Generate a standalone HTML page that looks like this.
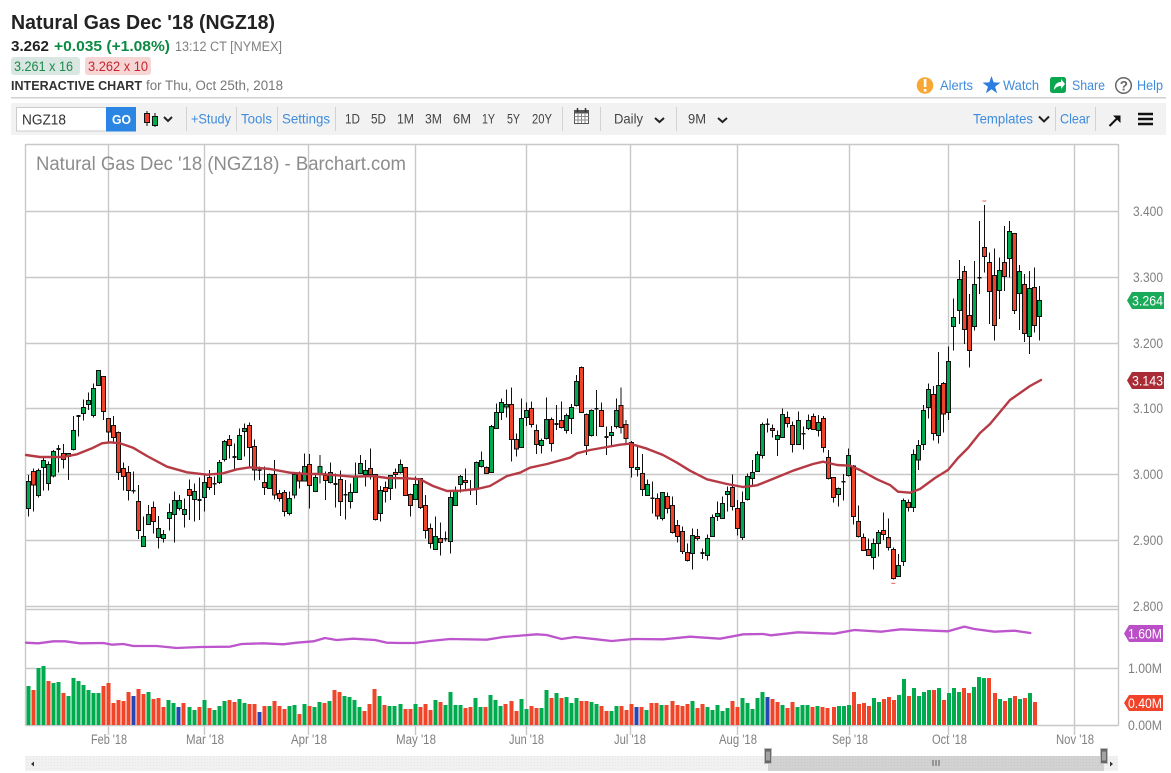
<!DOCTYPE html>
<html><head><meta charset="utf-8"><title>Natural Gas Dec '18 (NGZ18)</title>
<style>
html,body{margin:0;padding:0;background:#fff;width:1171px;height:773px;overflow:hidden}
svg{display:block}
text{font-family:"Liberation Sans",sans-serif}
.grid{stroke:#c8c8c8;stroke-width:1.4;fill:none}
.w{stroke:#111;stroke-width:3;fill:none;shape-rendering:crispEdges}
.g{fill:#00a84f;stroke:#111;stroke-width:3;shape-rendering:crispEdges}
.r{fill:#f0442a;stroke:#111;stroke-width:3;shape-rendering:crispEdges}
.d{stroke:#111;stroke-width:5;fill:none;shape-rendering:crispEdges}
.vg{stroke:#00ab4e;stroke-width:12;fill:none;shape-rendering:crispEdges}
.vr{stroke:#f1452a;stroke-width:12;fill:none;shape-rendering:crispEdges}
.vb{stroke:#2447b5;stroke-width:12;fill:none;shape-rendering:crispEdges}
.pu{stroke:#bd55cd;stroke-width:7;fill:none;stroke-linejoin:round;stroke-linecap:round}
.ax{fill:#808080;font-size:13.5px}
.lk{fill:#3f8cdc;font-size:14px}
.rg{fill:#444;font-size:13.5px}
.sep{stroke:#d2d2d2;stroke-width:1;shape-rendering:crispEdges}
.ch{stroke:#222;stroke-width:2;fill:none}
</style></head><body>
<svg width="1171" height="773" viewBox="0 0 1171 773" xmlns="http://www.w3.org/2000/svg">
<defs><pattern id="dots" width="3" height="3" patternUnits="userSpaceOnUse"><rect width="3" height="3" fill="none"/><rect width="1" height="1" fill="#000" fill-opacity=".05"/></pattern></defs>
<rect width="1171" height="773" fill="#fff"/>

<text x="11" y="29" font-size="20" font-weight="bold" fill="#222" textLength="264" lengthAdjust="spacingAndGlyphs">Natural Gas Dec '18 (NGZ18)</text>
<text x="11" y="51" font-size="15" font-weight="bold" fill="#222" textLength="38" lengthAdjust="spacingAndGlyphs">3.262</text>
<text x="54" y="51" font-size="15" font-weight="bold" fill="#0d8a43" textLength="116" lengthAdjust="spacingAndGlyphs">+0.035 (+1.08%)</text>
<text x="175" y="51" font-size="13.5" fill="#808080" textLength="107" lengthAdjust="spacingAndGlyphs">13:12 CT [NYMEX]</text>
<rect x="11" y="57" width="69" height="18" rx="3" fill="#d9e6e1"/>
<text x="14" y="71" font-size="13.5" fill="#1d8a4b" textLength="59" lengthAdjust="spacingAndGlyphs">3.261 x 16</text>
<rect x="85" y="57" width="66" height="18" rx="3" fill="#f6d5d5"/>
<text x="88" y="71" font-size="13.5" fill="#c8242e" textLength="60" lengthAdjust="spacingAndGlyphs">3.262 x 10</text>
<text x="11" y="90" font-size="13" font-weight="bold" fill="#333" textLength="131" lengthAdjust="spacingAndGlyphs">INTERACTIVE CHART</text>
<text x="146" y="90" font-size="13.5" fill="#777" textLength="137" lengthAdjust="spacingAndGlyphs">for Thu, Oct 25th, 2018</text>

<circle cx="925" cy="85.5" r="8.3" fill="#f7a834"/>
<rect x="923.8" y="79" width="2.6" height="8" fill="#fff"/><rect x="923.8" y="89" width="2.6" height="2.6" fill="#fff"/>
<text x="940" y="90" class="lk" textLength="33" lengthAdjust="spacingAndGlyphs">Alerts</text>
<path d="M991.5 76L993.7 82.4 1000.5 82.6 995.1 86.7 997.1 93.2 991.5 89.3 985.9 93.2 987.9 86.7 982.5 82.6 989.3 82.4z" fill="#2b7de0"/>
<text x="1003" y="90" class="lk" textLength="36" lengthAdjust="spacingAndGlyphs">Watch</text>
<rect x="1050" y="77" width="16" height="16" rx="2.5" fill="#0aa74f"/>
<path d="M1054 90c0-5 3-8 7-8v-3l4 5-4 5v-3c-3 0-5 1-7 4z" fill="#fff"/>
<text x="1072" y="90" class="lk" textLength="33" lengthAdjust="spacingAndGlyphs">Share</text>
<circle cx="1123.5" cy="85.5" r="7.8" fill="none" stroke="#666" stroke-width="1.5"/>
<text x="1119.8" y="90.5" font-size="13.5" font-weight="bold" fill="#666">?</text>
<text x="1137" y="90" class="lk" textLength="26" lengthAdjust="spacingAndGlyphs">Help</text>

<rect x="11" y="97" width="1155" height="1.5" fill="#cfcfcf"/>
<rect x="11" y="103" width="1155" height="32" fill="#f2f2f2"/>
<rect x="16.5" y="107.5" width="90" height="23.5" fill="#fff" stroke="#ccc"/>
<text x="22" y="124.5" font-size="14.5" fill="#333" textLength="44" lengthAdjust="spacingAndGlyphs">NGZ18</text>
<rect x="106" y="107" width="30" height="24.5" fill="#2b86e3"/>
<text x="112" y="124" font-size="13" font-weight="bold" fill="#fff" textLength="19" lengthAdjust="spacingAndGlyphs">GO</text>
<path d="M147 111V126M155 113V127" stroke="#111" stroke-width="1"/>
<rect x="144.5" y="113.5" width="5" height="9" fill="#e8402c" stroke="#111"/>
<rect x="152.5" y="116.5" width="5" height="9" fill="#00a84f" stroke="#111"/>
<path class="ch" d="M164 117l4 4 4-4"/>
<path class="sep" d="M186.5 107V131M236.5 107V131M277.5 107V131M335.5 107V131M562.5 107V131M600.5 107V131M676.5 107V131M1055.5 107V131M1095.5 107V131"/>
<text x="191" y="123.5" class="lk" textLength="40" lengthAdjust="spacingAndGlyphs">+Study</text>
<text x="241" y="123.5" class="lk" textLength="31" lengthAdjust="spacingAndGlyphs">Tools</text>
<text x="282" y="123.5" class="lk" textLength="48" lengthAdjust="spacingAndGlyphs">Settings</text>
<text x="345" y="123.5" class="rg" textLength="15" lengthAdjust="spacingAndGlyphs">1D</text>
<text x="371" y="123.5" class="rg" textLength="15" lengthAdjust="spacingAndGlyphs">5D</text>
<text x="397" y="123.5" class="rg" textLength="17" lengthAdjust="spacingAndGlyphs">1M</text>
<text x="425" y="123.5" class="rg" textLength="17" lengthAdjust="spacingAndGlyphs">3M</text>
<text x="453" y="123.5" class="rg" textLength="18" lengthAdjust="spacingAndGlyphs">6M</text>
<text x="482" y="123.5" class="rg" textLength="13" lengthAdjust="spacingAndGlyphs">1Y</text>
<text x="507" y="123.5" class="rg" textLength="13" lengthAdjust="spacingAndGlyphs">5Y</text>
<text x="532" y="123.5" class="rg" textLength="20" lengthAdjust="spacingAndGlyphs">20Y</text>
<rect x="574.5" y="110.5" width="14" height="13" fill="#fff" stroke="#555"/>
<rect x="574.5" y="110.5" width="14" height="3" fill="#555"/>
<path d="M577.5 108V112M585.5 108V112" stroke="#333" stroke-width="1.5"/>
<path d="M574.5 116.5H588.5M574.5 120H588.5M578 113V123M581.5 113V123M585 113V123" stroke="#888" stroke-width="1" fill="none"/>
<text x="614" y="123.5" font-size="14" fill="#444" textLength="29" lengthAdjust="spacingAndGlyphs">Daily</text>
<path class="ch" d="M655 118l4.5 4 4.5-4"/>
<text x="688" y="123.5" font-size="14" fill="#444" textLength="18" lengthAdjust="spacingAndGlyphs">9M</text>
<path class="ch" d="M718 118l4.5 4 4.5-4"/>
<text x="973" y="123.5" class="lk" textLength="60" lengthAdjust="spacingAndGlyphs">Templates</text>
<path class="ch" d="M1039 116.5l5 5 5-5"/>
<text x="1060" y="123.5" class="lk" textLength="30" lengthAdjust="spacingAndGlyphs">Clear</text>
<path d="M1109.5 126L1118 117.5" stroke="#111" stroke-width="2" fill="none"/><path d="M1113 115.5H1120.5V123z" fill="#111"/>
<path d="M1138 114H1153M1138 119H1153M1138 124H1153" stroke="#111" stroke-width="2.6" fill="none"/>

<!-- grid -->
<path class="grid" d="M25.5 144.5H1118.5M25.5 211.5H1118M25.5 277.5H1118M25.5 343.5H1118M25.5 408.5H1118M25.5 474.5H1118M25.5 540.5H1118M25.5 606.5H1118M25.5 609.5H1118M25.5 668.5H1118M25.5 725.5H1118.5"/>
<path class="grid" d="M25.5 144V725.5M1118.5 144V725.5M108.5 144V735M204.5 144V735M308.5 144V735M415.5 144V735M526.5 144V735M630.5 144V735M737.5 144V735M849.5 144V735M948.5 144V735M1074.5 144V735"/>
<text x="36" y="170" font-size="19" fill="#8c8c8c" textLength="370" lengthAdjust="spacingAndGlyphs">Natural Gas Dec '18 (NGZ18) - Barchart.com</text>

<!-- candles block 1 -->
<g transform="translate(20 360) scale(.33333)">
<path class="w" d="M25 345V470M40 325V455M55 325V413M70 290V392M85 305V392M100 270V352M115 255V338M130 252V325M145 280V360M160 168V272M175 165V230M190 118V182M205 97V150M220 70V172M235 32V76M250 50V180M265 175V245M280 168V250M295 215V360M310 307V392M325 318V422M340 335V400M355 375V537M370 470V560M385 435V495M400 425V520M415 468V565M430 510V548M448 430V512M463 395V548M478 405V452M493 415V503M508 358V480M523 370V485M538 353V480M553 345V455M568 330V390M583 350V405M598 300V372M613 240V305M628 225V295M643 250V330M658 205V300M673 190V290M688 188V320M703 238V362M718 320V360M733 320V405M748 340V385M763 300V418M778 390V425M793 390V470M808 395V466M823 340V415M838 335V385M853 280V365M868 282V446M886 340V396M900 285V370"/>
<path class="g" d="M19 365H31V445H19zM49 332H61V406H49zM64 302H76V322H64zM79 314H91V370H79zM94 275H106V348H94zM139 281H151V290H139zM154 212H166V268H154zM184 142H196V160H184zM199 122H211V133H199zM214 86H226V166H214zM229 32H241V76H229zM364 529H376V559H364zM379 463H391V493H379zM409 505H421V532H409zM424 523H436V535H424zM442 457H454V475H442zM457 421H469V463H457zM472 421H484V445H472zM487 448H499V463H487zM517 394H529V418H517zM547 368H559V412H547zM592 307H604V367H592zM607 244H619V298H607zM652 226H664V298H652zM667 205H679V214H667zM742 343H754V385H742zM802 415H814V460H802zM817 343H829V405H817zM847 320H859V363H847zM880 352H892V394H880zM894 320H906V340H894z"/>
<path class="r" d="M34 335H46V375H34zM124 281H136V298H124zM244 50H256V154H244zM259 176H271V216H259zM274 196H286V232H274zM289 217H301V337H289zM304 325H316V349H304zM319 337H331V391H319zM349 424H361V511H349zM394 442H406V484H394zM502 388H514V406H502zM562 352H574V382H562zM622 238H634V257H622zM682 196H694V262H682zM697 259H709V330H697zM727 367H739V382H727zM757 344H769V405H757zM772 400H784V415H772zM787 397H799V454H787zM832 342H844V363H832zM862 313H874V376H862z"/>
<path class="d" d="M109 267H121M169 168H181M334 392H346M532 420H544M577 371H589M637 291H649M712 331H724"/>
</g>

<!-- candles block 2 -->
<g transform="translate(320 360) scale(.33333)">
<path class="w" d="M16 335V420M31 307V370M46 340V443M61 332V468M76 360V478M91 370V446M106 307V398M121 285V342M136 300V380M151 265V358M166 343V481M181 378V485M196 365V428M211 345V420M226 325V385M241 298V340M256 322V408M271 400V470M286 350V420M301 355V447M316 405V535M331 490V565M346 470V570M361 487V587M376 515V545M391 390V580M406 380V438M421 345V398M436 325V393M451 360V405M469 305V435M484 274V322M499 320V342M514 195V338M529 130V207M544 115V180M559 88V173M574 82V305M589 220V290M604 115V263M619 128V198M634 125V203M649 193V282M664 235V280M679 113V238M694 172V275M709 135V210M724 125V205M739 160V220M754 132V222M769 45V140M784 20V158M799 160V285M814 148V230M829 90V228M844 127V200M859 200V285M874 198V258M889 115V205"/>
<path class="g" d="M25 338H37V367H25zM85 398H97V424H85zM100 350H112V397H100zM115 310H127V340H115zM130 332H142V343H130zM175 391H187V460H175zM205 347H217V385H205zM235 314H247V337H235zM280 374H292V418H280zM340 530H352V568H340zM385 412H397V544H385zM400 395H412V436H400zM415 350H427V373H415zM463 308H475V385H463zM478 301H490V319H478zM508 199H520V337H508zM523 157H535V205H523zM538 127H550V157H538zM553 133H565V141H553zM598 176H610V262H598zM613 151H625V172H613zM658 241H670V256H658zM673 179H685V235H673zM733 166H745V211H733zM748 143H760V175H748zM763 65H775V136H763zM808 152H820V226H808zM868 217H880V226H868zM883 152H895V199H883z"/>
<path class="r" d="M10 347H22V362H10zM55 358H67V424H55zM145 325H157V343H145zM160 344H172V479H160zM190 383H202V394H190zM220 338H232V343H220zM250 323H262V406H250zM265 404H277V436H265zM295 355H307V442H295zM310 436H322V511H310zM325 506H337V550H325zM355 536H367V547H355zM430 361H442V367H430zM493 322H505V340H493zM568 134H580V238H568zM583 238H595V267H583zM628 146H640V193H628zM643 211H655V253H643zM688 179H700V250H688zM718 182H730V203H718zM778 22H790V157H778zM793 163H805V257H793zM838 152H850V199H838z"/>
<path class="d" d="M40 372H52M70 404H82M370 536H382M445 389H457M703 192H715M823 146H835M853 231H865"/>
</g>

<!-- candles block 3 -->
<g transform="translate(620 380) scale(.33333)">
<path class="w" d="M3 22V160M18 120V190M34 183V293M52 200V290M67 222V348M82 298V348M97 305V400M112 340V418M127 337V422M142 337V400M157 350V460M172 420V488M187 440V522M202 490V545M217 445V568M232 447V482M247 505V537M262 463V542M277 403V470M292 365V423M307 350V416M322 320V395M337 283V392M352 360V467M367 335V480M382 280V362M397 240V320M412 215V276M427 127V235M442 115V158M457 133V172M472 152V228M487 85V173M502 95V142M517 125V218M535 94V195M550 140V209M565 103V150M580 100V150M595 105V170M610 108V218M625 210V298M640 292V367M655 322V380M670 282V362M685 205V290M700 255V434M715 376V472M730 460V513M745 475V528M760 475V568M775 450V530M790 397V480M805 415V512M820 502V598M835 522V590M850 355V558M865 358V395M880 208V396M895 180V270"/>
<path class="g" d="M46 262H58V268H46zM76 314H88V346H76zM121 338H133V415H121zM211 466H223V520H211zM256 476H268V526H256zM271 413H283V469H271zM286 401H298V409H286zM301 371H313V415H301zM316 335H328V343H316zM361 368H373V472H361zM376 290H388V358H376zM391 278H403V295H391zM406 224H418V274H406zM421 134H433V226H421zM466 166H478V178H466zM481 103H493V172H481zM529 122H541V193H529zM559 122H571V146H559zM589 128H601V151H589zM649 325H661V344H649zM679 226H691V287H679zM754 490H766V532H754zM769 458H781V490H769zM829 557H841V590H829zM844 362H856V544H844zM874 224H886V382H874zM889 197H901V240H889z"/>
<path class="r" d="M-3 76H9V142H-3zM12 133H24V176H12zM28 187H40V262H28zM61 281H73V328H61zM106 356H118V408H106zM136 350H148V385H136zM151 377H163V457H151zM166 436H178V469H166zM181 455H193V514H181zM196 518H208V541H196zM226 470H238V475H226zM331 322H343V379H331zM346 386H358V445H346zM451 146H463V151H451zM496 112H508V130H496zM511 136H523V193H511zM574 110H586V148H574zM604 116H616V202H604zM619 233H631V295H619zM634 293H646V352H634zM694 258H706V409H694zM709 424H721V469H709zM724 472H736V511H724zM739 509H751V526H739zM784 452H796V463H784zM799 472H811V502H799zM814 508H826V595H814zM859 367H871V382H859z"/>
<path class="d" d="M91 355H103M241 519H253M436 133H448M544 161H556M664 305H676"/>
<path d="M814 610H826" stroke="#e0605a" stroke-width="3" fill="none"/>
</g>

<!-- candles block 4 -->
<g transform="translate(905 340) scale(.33333)">
<path class="w" d="M55 195V330M70 130V236M85 138V302M100 36V310M115 126V278M130 20V240"/>
<path class="g" d="M49 211H61V313H49zM64 148H76V202H64zM94 136H106V286H94zM124 64H136V217H124z"/>
<path class="r" d="M79 163H91V280H79zM109 130H121V222H109z"/>
</g>
<g transform="translate(900 190) scale(.33333)">
<path class="w" d="M160 325V482M178 210V402M193 228V462M208 312V533M223 213V422M238 93V312M253 45V248M268 187V402M283 175V452M298 203V387M313 108V303M328 93V262M343 130V372M358 225V420M373 252V456M388 243V492M403 232V428M418 288V452"/>
<path class="g" d="M154 382H166V409H154zM172 268H184V361H172zM217 284H229V409H217zM292 241H304V301H292zM322 124H334V205H322zM352 245H364V310H352zM382 295H394V439H382zM412 331H424V379H412z"/>
<path class="r" d="M187 245H199V418H187zM202 376H214V481H202zM247 172H259V199H247zM262 218H274V304H262zM277 256H289V406H277zM307 218H319V260H307zM337 130H349V361H337zM367 283H379V430H367zM397 292H409V406H397z"/>
<path class="d" d="M232 263H244"/>
<path d="M247 33H259" stroke="#e0605a" stroke-width="3" fill="none"/>
</g>

<!-- moving average -->
<path d="M26 455L40 457 63 457 77 454.3 92 448.3 102 443.3 110 442.3 120 443.3 133 447.7 147 456 167 466.7 187 472.3 207 474.7 223 473.3 237 469.3 250 467.3 270 469 290 472.7 307 474 320 474 337 475.3 353 476.7 373 476 387 478 407 478.3 420 479.3 433 486 447 491 460 490.7 477 489 490 486 507 476 520 472.7 530 467.7 547 464 570 457.7 577 453.3 590 450 607 447 620 444.7 630 443.7 647 448.7 663 455 677 462.7 690 470.7 707 479.3 727 484 743 487 757 485.3 777 477.3 793 470.7 813 464 823 461.7 837 465 850 465.7 860 470 877 479.3 890 485 898 491.7 910 492.7 920 489 935 478 948 470 958 458 968 448 980 433 990 424 1000 412 1010 400 1020 393 1030 386 1041 380" fill="none" stroke="#b53a44" stroke-width="2.4" stroke-linejoin="round" stroke-linecap="round"/>

<!-- volume -->
<g transform="translate(0 610) scale(.33333)">
<path class="vg" d="M86 345V228M116 345V174M131 345V168M161 345V219M176 345V216M206 345V258M221 345V204M236 345V213M251 345V225M266 345V240M281 345V249M296 345V249M446 345V246M506 345V270M521 345V279M569 345V291M584 345V300M614 345V270M644 345V300M659 345V288M674 345V273M719 345V267M734 345V279M809 345V288M869 345V288M884 345V285M914 345V282M944 345V291M959 345V276M989 345V273M1034 345V258M1049 345V261M1064 345V270M1079 345V291M1139 345V258M1169 345V288M1184 345V288"/>
<path class="vr" d="M101 345V240M146 345V213M191 345V249M311 345V228M326 345V219M341 345V279M356 345V270M371 345V273M386 345V246M416 345V237M431 345V252M461 345V267M476 345V264M491 345V291M551 345V279M599 345V291M629 345V294M689 345V270M704 345V276M749 345V282M764 345V282M794 345V288M824 345V273M839 345V288M854 345V297M899 345V312M929 345V288M974 345V279M1004 345V240M1019 345V246M1094 345V303M1109 345V282M1124 345V237M1154 345V285"/>
<path class="vb" d="M401 345V258M536 345V291M779 345V306"/>
<path class="pu" d="M78 98L115 100 160 94 195 94 240 100 310 99 335 104 370 102 400 108 470 108 530 114 600 111 690 110 725 102 790 100 850 103 890 98 940 94 975 84 1010 90 1060 86 1125 90 1160 98 1200 99"/>
</g>
<g transform="translate(400 610) scale(.33333)">
<path class="vg" d="M2 345V282M47 345V282M107 345V270M137 345V285M152 345V246M167 345V285M182 345V285M227 345V264M242 345V291M272 345V255M287 345V270M302 345V288M365 345V267M380 345V297M425 345V294M440 345V240M470 345V249M500 345V261M515 345V279M530 345V264M575 345V276M590 345V282M635 345V303M650 345V288M740 345V300M785 345V285M878 345V273M923 345V291M938 345V300M953 345V285M968 345V303M983 345V294M1028 345V264M1043 345V279M1058 345V297M1073 345V264M1088 345V246M1148 345V285M1193 345V291"/>
<path class="vr" d="M17 345V297M32 345V297M62 345V291M77 345V282M92 345V300M122 345V276M197 345V294M212 345V291M257 345V291M317 345V282M335 345V273M350 345V303M395 345V288M410 345V294M455 345V264M485 345V264M545 345V273M560 345V273M605 345V288M620 345V303M665 345V288M680 345V300M695 345V282M725 345V291M755 345V279M770 345V279M800 345V285M818 345V273M833 345V285M848 345V288M863 345V282M893 345V294M908 345V282M998 345V273M1013 345V291M1118 345V267M1133 345V276M1163 345V294M1178 345V276"/>
<path class="vb" d="M710 345V291M1103 345V261"/>
<path class="pu" d="M0 99L45 99 90 93 150 87 260 89 310 81 410 73 440 75 485 87 525 81 590 88 635 93 700 87 790 88 870 80 960 86 1030 73 1090 72 1113 76"/>
</g>
<g transform="translate(771 610) scale(.33333)">
<path class="vg" d="M95 345V285M110 345V285M140 345V288M204 345V288M219 345V288M234 345V285M309 345V264M324 345V276M384 345V255M399 345V207M429 345V234M444 345V258M459 345V246M474 345V240M504 345V234M534 345V249M549 345V234M564 345V246M609 345V231M624 345V201M639 345V204M687 345V267M717 345V264M747 345V267M777 345V249"/>
<path class="vr" d="M125 345V291M155 345V291M170 345V294M189 345V291M249 345V246M264 345V282M279 345V279M294 345V288M339 345V267M354 345V261M369 345V270M414 345V258M489 345V240M519 345V270M579 345V234M594 345V249M654 345V204M672 345V249M702 345V273M732 345V258M762 345V264M792 345V276"/>
<path class="pu" d="M0 76L80 67 190 71 250 60 330 65 390 58 530 64 580 50 610 57 670 65 730 62 778 69"/>
</g>

<!-- axis labels -->
<text x="1133" y="216" class="ax" textLength="30" lengthAdjust="spacingAndGlyphs">3.400</text>
<text x="1133" y="282" class="ax" textLength="30" lengthAdjust="spacingAndGlyphs">3.300</text>
<text x="1133" y="348" class="ax" textLength="30" lengthAdjust="spacingAndGlyphs">3.200</text>
<text x="1133" y="413" class="ax" textLength="30" lengthAdjust="spacingAndGlyphs">3.100</text>
<text x="1133" y="479" class="ax" textLength="30" lengthAdjust="spacingAndGlyphs">3.000</text>
<text x="1133" y="545" class="ax" textLength="30" lengthAdjust="spacingAndGlyphs">2.900</text>
<text x="1133" y="611" class="ax" textLength="30" lengthAdjust="spacingAndGlyphs">2.800</text>
<path d="M1127 300.5L1132 292H1164V309H1132z" fill="#1aab5a"/>
<text x="1132" y="305.5" font-size="14" fill="#fff" textLength="31" lengthAdjust="spacingAndGlyphs">3.264</text>
<path d="M1127 380.5L1132 372H1164V389H1132z" fill="#a92b35"/>
<text x="1132" y="385.5" font-size="14" fill="#fff" textLength="31" lengthAdjust="spacingAndGlyphs">3.143</text>
<path d="M1124 633.5L1129 625H1163V642H1129z" fill="#bb4fc7"/>
<text x="1128" y="638.5" font-size="14" fill="#fff" textLength="34" lengthAdjust="spacingAndGlyphs">1.60M</text>
<text x="1128" y="673" class="ax" textLength="34" lengthAdjust="spacingAndGlyphs">1.00M</text>
<path d="M1124 703L1129 695H1163V711H1129z" fill="#f1432a"/>
<text x="1128" y="708" font-size="14" fill="#fff" textLength="34" lengthAdjust="spacingAndGlyphs">0.40M</text>
<text x="1128" y="730" class="ax" textLength="34" lengthAdjust="spacingAndGlyphs">0.00M</text>

<text x="91" y="744" class="ax" textLength="36" lengthAdjust="spacingAndGlyphs">Feb '18</text>
<text x="186" y="744" class="ax" textLength="38" lengthAdjust="spacingAndGlyphs">Mar '18</text>
<text x="291" y="744" class="ax" textLength="36" lengthAdjust="spacingAndGlyphs">Apr '18</text>
<text x="396" y="744" class="ax" textLength="40" lengthAdjust="spacingAndGlyphs">May '18</text>
<text x="509" y="744" class="ax" textLength="35" lengthAdjust="spacingAndGlyphs">Jun '18</text>
<text x="614" y="744" class="ax" textLength="32" lengthAdjust="spacingAndGlyphs">Jul '18</text>
<text x="719" y="744" class="ax" textLength="38" lengthAdjust="spacingAndGlyphs">Aug '18</text>
<text x="832" y="744" class="ax" textLength="36" lengthAdjust="spacingAndGlyphs">Sep '18</text>
<text x="932" y="744" class="ax" textLength="35" lengthAdjust="spacingAndGlyphs">Oct '18</text>
<text x="1056" y="744" class="ax" textLength="38" lengthAdjust="spacingAndGlyphs">Nov '18</text>

<!-- scrollbar -->
<rect x="25" y="756" width="1093" height="15" fill="#f1f1f1"/>
<rect x="768" y="756" width="336" height="15" fill="#d2d2d2"/>
<rect x="25" y="756" width="1093" height="15" fill="url(#dots)"/>
<path d="M34 761.5V766.5L31 764z" fill="#333"/>
<path d="M1110 761.5V766.5L1113 764z" fill="#333"/>
<rect x="764.5" y="748.5" width="7" height="15" fill="#666" stroke="#bbb"/>
<path d="M767 751.5V760.5M769 751.5V760.5" stroke="#ddd" stroke-width="1"/>
<rect x="1100.5" y="748.5" width="7" height="15" fill="#666" stroke="#bbb"/>
<path d="M1103 751.5V760.5M1105 751.5V760.5" stroke="#ddd" stroke-width="1"/>
<path d="M933 760V766M936 760V766M939 760V766" stroke="#888" stroke-width="1.6"/>
</svg>
</body></html>
